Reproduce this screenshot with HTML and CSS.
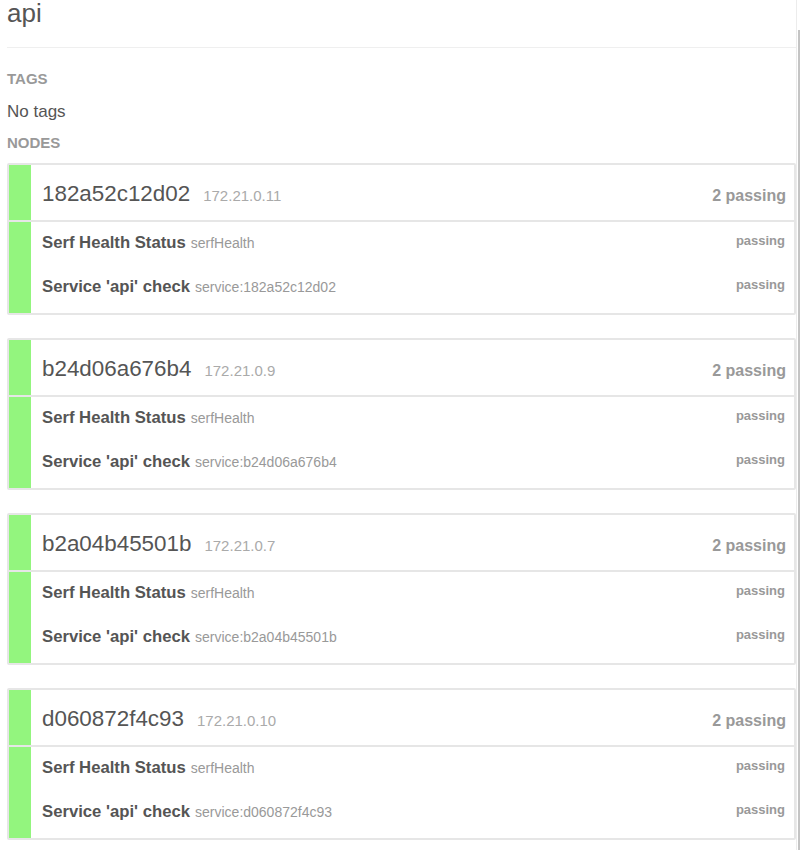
FILE: index.html
```html
<!DOCTYPE html>
<html>
<head>
<meta charset="utf-8">
<link rel="stylesheet" href="styles.css">
</head>
<body>
<div class="page">
  <h1 class="service-title">api</h1>
  <div class="label label-tags">TAGS</div>
  <div class="no-tags">No tags</div>
  <div class="label label-nodes">NODES</div>

  <div class="node">
    <div class="node-head">
      <div class="bar"></div>
      <div class="head-content">
        <div class="node-name">182a52c12d02<span class="node-ip">172.21.0.11</span></div>
        <div class="node-status">2 passing</div>
      </div>
    </div>
    <div class="node-body">
      <div class="bar"></div>
      <div class="checks">
        <div class="check"><div class="check-name">Serf Health Status<span class="check-id">serfHealth</span></div><div class="check-status">passing</div></div>
        <div class="check"><div class="check-name">Service 'api' check<span class="check-id">service:182a52c12d02</span></div><div class="check-status">passing</div></div>
      </div>
    </div>
  </div>

  <div class="node">
    <div class="node-head">
      <div class="bar"></div>
      <div class="head-content">
        <div class="node-name">b24d06a676b4<span class="node-ip">172.21.0.9</span></div>
        <div class="node-status">2 passing</div>
      </div>
    </div>
    <div class="node-body">
      <div class="bar"></div>
      <div class="checks">
        <div class="check"><div class="check-name">Serf Health Status<span class="check-id">serfHealth</span></div><div class="check-status">passing</div></div>
        <div class="check"><div class="check-name">Service 'api' check<span class="check-id">service:b24d06a676b4</span></div><div class="check-status">passing</div></div>
      </div>
    </div>
  </div>

  <div class="node">
    <div class="node-head">
      <div class="bar"></div>
      <div class="head-content">
        <div class="node-name">b2a04b45501b<span class="node-ip">172.21.0.7</span></div>
        <div class="node-status">2 passing</div>
      </div>
    </div>
    <div class="node-body">
      <div class="bar"></div>
      <div class="checks">
        <div class="check"><div class="check-name">Serf Health Status<span class="check-id">serfHealth</span></div><div class="check-status">passing</div></div>
        <div class="check"><div class="check-name">Service 'api' check<span class="check-id">service:b2a04b45501b</span></div><div class="check-status">passing</div></div>
      </div>
    </div>
  </div>

  <div class="node">
    <div class="node-head">
      <div class="bar"></div>
      <div class="head-content">
        <div class="node-name">d060872f4c93<span class="node-ip">172.21.0.10</span></div>
        <div class="node-status">2 passing</div>
      </div>
    </div>
    <div class="node-body">
      <div class="bar"></div>
      <div class="checks">
        <div class="check"><div class="check-name">Serf Health Status<span class="check-id">serfHealth</span></div><div class="check-status">passing</div></div>
        <div class="check"><div class="check-name">Service 'api' check<span class="check-id">service:d060872f4c93</span></div><div class="check-status">passing</div></div>
      </div>
    </div>
  </div>
</div>
<div class="scroll-line"></div>
<div class="scroll-thumb"></div>
</body>
</html>
```
FILE: styles.css
```css
html, body {
  margin: 0;
  padding: 0;
  background: #fff;
}
body {
  font-family: "Liberation Sans", Arial, sans-serif;
  color: #555;
  overflow: hidden;
}
.page {
  margin-left: 7px;
  width: 789px;
}
.service-title {
  margin: 0;
  font-size: 26px;
  font-weight: normal;
  line-height: 26px;
  height: 25px;
  padding-bottom: 22px;
  border-bottom: 1px solid #efefef;
  color: #555;
}
.label {
  font-size: 15px;
  font-weight: bold;
  line-height: 20px;
  color: #999;
}
.label-tags {
  margin-top: 21px;
}
.no-tags {
  font-size: 17px;
  line-height: 22px;
  margin-top: 12px;
  color: #555;
}
.label-nodes {
  margin-top: 10px;
  margin-bottom: 10px;
}
.node {
  border: 2px solid #e6e6e6;
  border-radius: 2px;
  margin-bottom: 23px;
}
.bar {
  width: 22px;
  flex: none;
  background: #93f57e;
}
.node-head {
  display: flex;
  height: 55px;
  border-bottom: 2px solid #e6e6e6;
}
.head-content {
  flex: 1;
  display: flex;
  align-items: baseline;
  justify-content: space-between;
  padding: 16px 8px 0 11px;
  line-height: 25px;
}
.node-name {
  font-size: 22.4px;
  color: #555;
}
.node-ip {
  font-size: 15px;
  color: #aaa;
  margin-left: 13px;
}
.node-status {
  font-size: 16px;
  font-weight: bold;
  color: #999;
}
.node-body {
  display: flex;
}
.checks {
  flex: 1;
  padding-bottom: 3px;
}
.check {
  display: flex;
  justify-content: space-between;
  align-items: flex-start;
  padding: 11px 9px 13px 11px;
}
.check-name {
  font-size: 16.7px;
  line-height: 20px;
  font-weight: bold;
  color: #555;
}
.check-id {
  font-size: 14px;
  font-weight: normal;
  color: #999;
  margin-left: 5px;
}
.check-status {
  font-size: 13px;
  line-height: 16px;
  font-weight: bold;
  color: #999;
}
.scroll-line {
  position: fixed;
  top: 0;
  bottom: 0;
  left: 796px;
  width: 1px;
  background: #ececec;
}
.scroll-thumb {
  position: fixed;
  top: 30px;
  bottom: 0;
  left: 798px;
  width: 2px;
  background: #c4c4c4;
}
```
